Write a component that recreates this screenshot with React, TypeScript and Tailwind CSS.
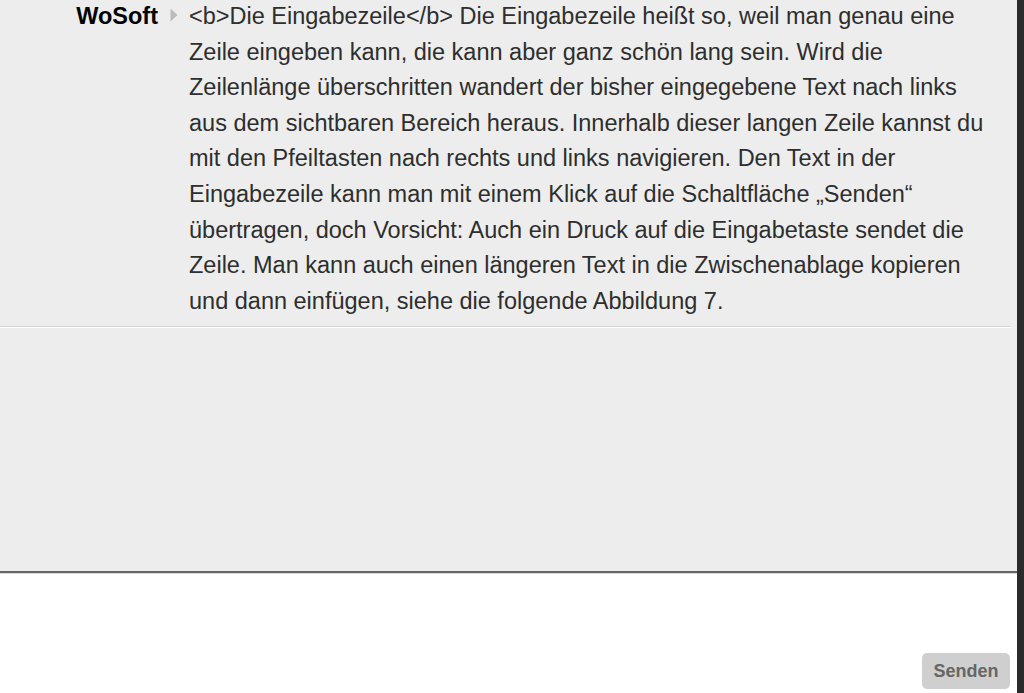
import { useState } from 'react'

const lines = [
  '<b>Die Eingabezeile</b> Die Eingabezeile heißt so, weil man genau eine',
  'Zeile eingeben kann, die kann aber ganz schön lang sein. Wird die',
  'Zeilenlänge überschritten wandert der bisher eingegebene Text nach links',
  'aus dem sichtbaren Bereich heraus. Innerhalb dieser langen Zeile kannst du',
  'mit den Pfeiltasten nach rechts und links navigieren. Den Text in der',
  'Eingabezeile kann man mit einem Klick auf die Schaltfläche „Senden“',
  'übertragen, doch Vorsicht: Auch ein Druck auf die Eingabetaste sendet die',
  'Zeile. Man kann auch einen längeren Text in die Zwischenablage kopieren',
  'und dann einfügen, siehe die folgende Abbildung 7.',
]

export default function App() {
  const [input, setInput] = useState('')

  return (
    <div className="flex h-[693px] w-[1024px] overflow-hidden bg-white font-['Liberation_Sans',Arial,sans-serif]">
      <div className="flex flex-1 flex-col">
        {/* Chatverlauf */}
        <div className="h-[571px] bg-[#ededed]">
          <div className="mr-[6px] flex border-b border-[#d4d4d4] pt-0 pb-[7px]">
            <div className="-mt-[1px] flex w-[189px] shrink-0 items-start justify-end pr-[11px] text-[23.5px] leading-[35.6px]">
              <span className="font-bold text-black">WoSoft</span>
              <svg width="8" height="32" viewBox="0 0 8 32" className="ml-[12px]">
                <path d="M0.5 9.5 L7.5 16 L0.5 22.5 Z" fill="#bcbcbc" />
              </svg>
            </div>
            <p className="-mt-[1px] whitespace-nowrap text-[23.5px] leading-[35.6px] text-[#2e2e2e]">
              {lines.map((l, i) => (
                <span key={i} className="block">
                  {l}
                </span>
              ))}
            </p>
          </div>
          <div className="mr-[6px] h-px bg-white" />
        </div>
        <div className="h-[2px] bg-[#666]" />
        <div className="h-px bg-[#d8d8d8]" />
        {/* Eingabe */}
        <div className="flex flex-1 flex-col bg-white">
          <input
            value={input}
            onChange={(e) => setInput(e.target.value)}
            className="h-[70px] w-full bg-transparent px-3 text-[20px] outline-none"
          />
          <div className="flex flex-1 items-start justify-end pr-[7px] pt-[9px]">
            <button className="h-[36px] w-[88px] rounded-[5px] bg-[#cfcfcf] text-[18px] font-bold text-[#666]">
              Senden
            </button>
          </div>
        </div>
      </div>
      <div className="w-[7px] shrink-0 bg-[#2b2b2b]" />
    </div>
  )
}
